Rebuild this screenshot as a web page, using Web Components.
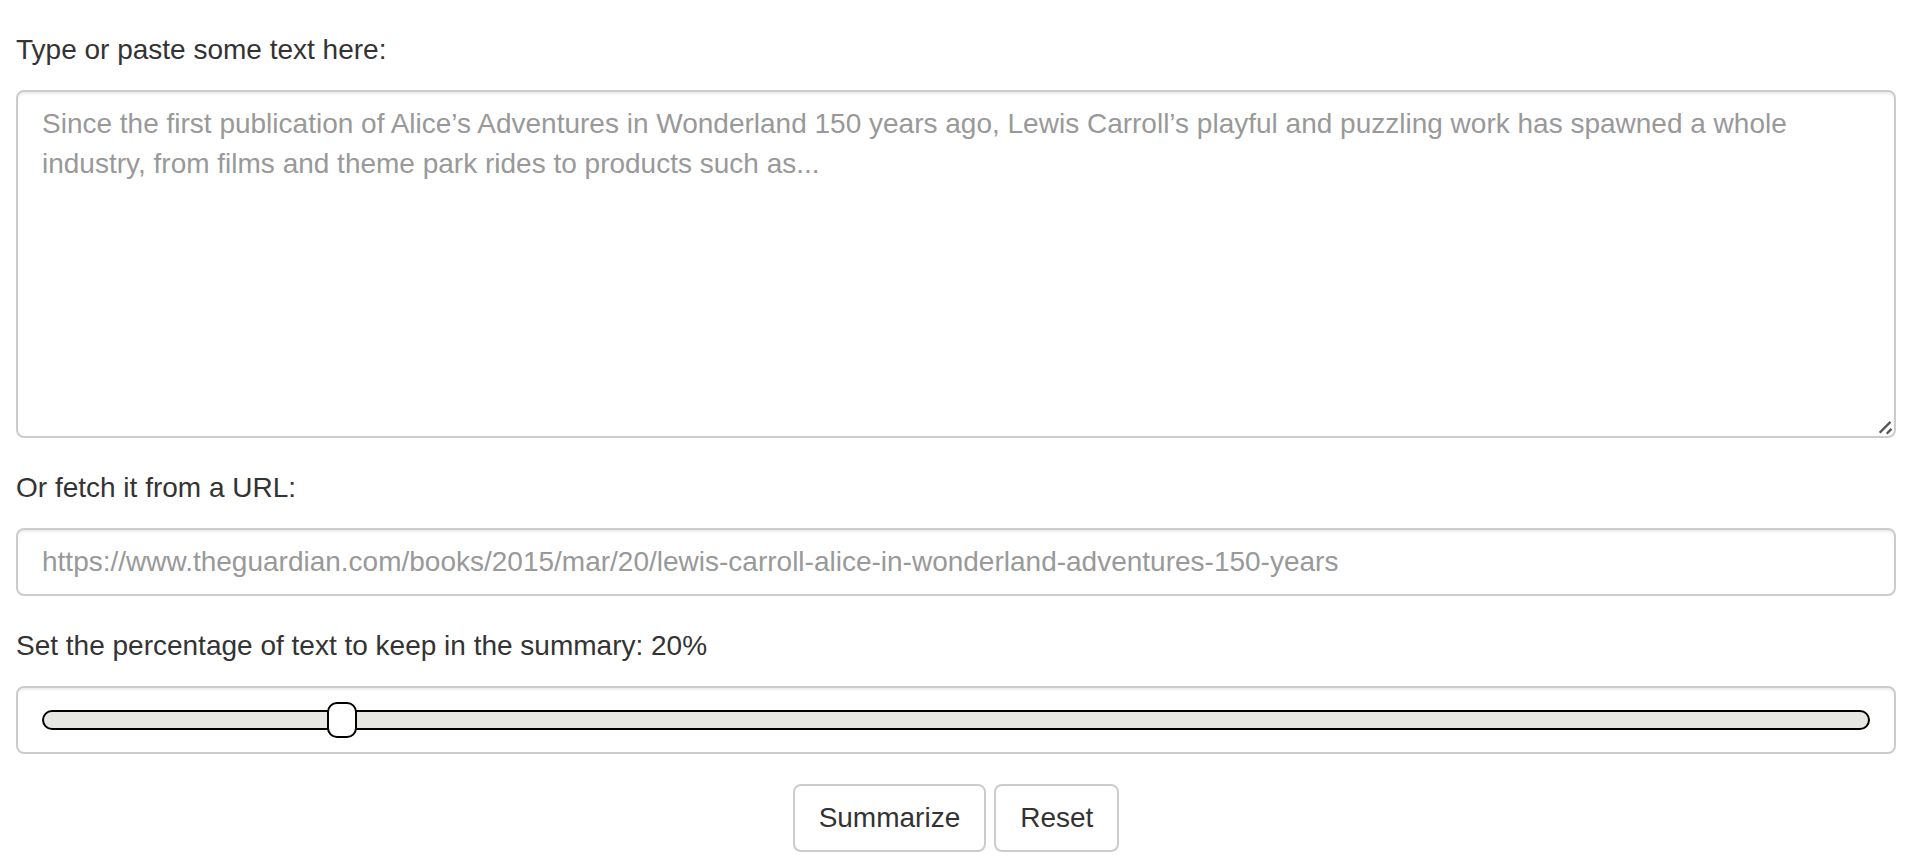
<!DOCTYPE html>
<html lang="en">
<head>
<meta charset="utf-8">
<meta name="viewport" content="width=device-width, initial-scale=1">
<title>Text summarizer</title>
<style>
  body {
    margin: 0;
    background: #fff;
    color: #333;
    font: 28px/40px "Liberation Sans", Arial, sans-serif;
    --line: #ccc;
  }
</style>
</head>
<body>
<summary-form>
  <text-field name="text" rows="8" placeholder="Since the first publication of Alice’s Adventures in Wonderland 150 years ago, Lewis Carroll’s playful and puzzling work has spawned a whole industry, from films and theme park rides to products such as...">Type or paste some text here:</text-field>
  <url-field name="url" placeholder="https://www.theguardian.com/books/2015/mar/20/lewis-carroll-alice-in-wonderland-adventures-150-years">Or fetch it from a URL:</url-field>
  <percent-field min="5" max="100" value="20">Set the percentage of text to keep in the summary:</percent-field>
  <action-button slot="actions">Summarize</action-button>
  <action-button slot="actions" kind="reset">Reset</action-button>
</summary-form>

<script>
  const fieldStyles = `
    :host { display: flex; flex-direction: column; gap: 20px; }
    .control {
      box-sizing: border-box;
      display: block;
      width: 100%;
      margin: 0;
      padding: 12px 24px;
      border: 2px solid var(--line);
      border-radius: 8px;
      background: #fff;
      box-shadow: inset 0 2px 2px rgba(0, 0, 0, .075);
      color: #555;
      font: inherit;
    }
    .control::placeholder { color: #999; opacity: 1; }
    .control:focus-within { outline: none; border-color: #66afe9; }
  `;

  class SummaryForm extends HTMLElement {
    constructor() {
      super();
      this.attachShadow({ mode: "open" }).innerHTML = `
        <style>
          :host { display: block; }
          form { display: flex; flex-direction: column; gap: 30px; padding: 30px 16px 12px; }
          .actions { display: flex; justify-content: center; gap: 8px; }
        </style>
        <form>
          <slot></slot>
          <div class="actions"><slot name="actions"></slot></div>
        </form>`;
      this.addEventListener("form-reset", () => {
        for (const field of this.children) field.reset?.();
      });
    }
  }

  class TextField extends HTMLElement {
    constructor() {
      super();
      this.attachShadow({ mode: "open" }).innerHTML = `
        <style>
          ${fieldStyles}
          textarea { resize: vertical; }
          textarea::-webkit-resizer {
            background: url("data:image/svg+xml,%3Csvg xmlns='http://www.w3.org/2000/svg' width='15' height='15'%3E%3Cpath d='M.7 11.700 11.500 .9M7.700 12.700 12.500 7.900' fill='none' stroke='%23555' stroke-width='2.300'/%3E%3C/svg%3E") no-repeat right bottom;
          }
        </style>
        <label for="control"><slot></slot></label>
        <textarea class="control" id="control"></textarea>`;
      this.control = this.shadowRoot.getElementById("control");
    }
    connectedCallback() {
      this.control.placeholder = this.getAttribute("placeholder");
      this.control.rows = this.getAttribute("rows");
    }
    reset() { this.control.value = ""; }
  }

  class UrlField extends HTMLElement {
    constructor() {
      super();
      this.attachShadow({ mode: "open" }).innerHTML = `
        <style>${fieldStyles}</style>
        <label for="control"><slot></slot></label>
        <input class="control" id="control" type="url">`;
      this.control = this.shadowRoot.getElementById("control");
    }
    connectedCallback() { this.control.placeholder = this.getAttribute("placeholder"); }
    reset() { this.control.value = ""; }
  }

  class PercentField extends HTMLElement {
    constructor() {
      super();
      this.attachShadow({ mode: "open" }).innerHTML = `
        <style>
          ${fieldStyles}
          .control { display: flex; align-items: center; min-height: 68px; }
          input {
            appearance: none;
            width: 100%;
            height: 20px;
            margin: 0;
            box-sizing: border-box;
            background: none;
          }
          input:focus { outline: none; }
          input::-webkit-slider-runnable-track {
            box-sizing: border-box;
            height: 20px;
            border: 2px solid #000;
            border-radius: 10px;
            background: #e6e6e2;
          }
          input::-webkit-slider-thumb {
            appearance: none;
            box-sizing: border-box;
            width: 30px;
            height: 36px;
            margin-top: -10px;
            border: 2px solid #000;
            border-radius: 10px;
            background: #fff;
          }
        </style>
        <label for="control"><slot></slot> <span id="value"></span></label>
        <div class="control"><input id="control" type="range"></div>`;
      this.control = this.shadowRoot.getElementById("control");
      this.control.addEventListener("input", () => this.show());
    }
    connectedCallback() {
      for (const name of ["min", "max", "value"]) this.control.setAttribute(name, this.getAttribute(name));
      this.show();
    }
    show() { this.shadowRoot.getElementById("value").textContent = this.control.value + "%"; }
    reset() { this.control.value = this.getAttribute("value"); this.show(); }
  }

  class ActionButton extends HTMLElement {
    constructor() {
      super();
      this.attachShadow({ mode: "open" }).innerHTML = `
        <style>
          :host { display: block; }
          button {
            display: block;
            margin: 0;
            padding: 12px 24px;
            border: 2px solid var(--line);
            border-radius: 8px;
            background: #fff;
            color: inherit;
            font: inherit;
            cursor: pointer;
          }
          button:hover { background: #e6e6e6; }
        </style>
        <button type="button"><slot></slot></button>`;
      this.addEventListener("click", () => {
        if (this.getAttribute("kind") === "reset")
          this.dispatchEvent(new CustomEvent("form-reset", { bubbles: true }));
      });
    }
  }

  customElements.define("text-field", TextField);
  customElements.define("url-field", UrlField);
  customElements.define("percent-field", PercentField);
  customElements.define("action-button", ActionButton);
  customElements.define("summary-form", SummaryForm);
</script>
</body>
</html>
